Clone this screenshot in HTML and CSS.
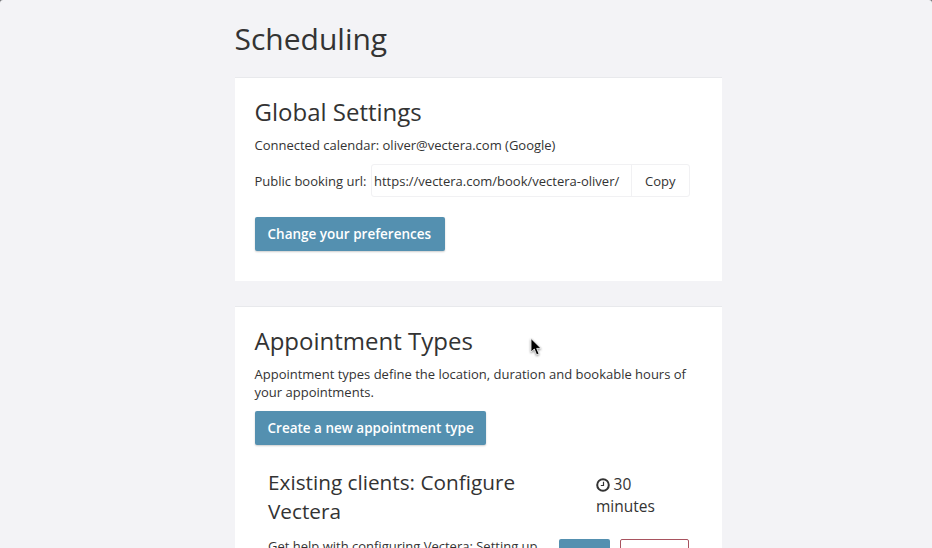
FILE: index.html
```html
<!DOCTYPE html>
<html lang="en">
<head>
<meta charset="utf-8">
<title>Scheduling</title>
<link rel="stylesheet" href="styles.css">
</head>
<body>
<main class="page">
  <h1 class="title">Scheduling</h1>
  <section class="card card-global">
    <h2 class="card-title">Global Settings</h2>
    <p class="line">Connected calendar: oliver@vectera.com (Google)</p>
    <div class="url-row">
      <span class="url-label">Public booking url:</span>
      <div class="url-group">
        <span class="url-value">https://vectera.com/book/vectera-oliver/</span>
        <span class="url-copy">Copy</span>
      </div>
    </div>
    <a class="btn btn-pref">Change your preferences</a>
  </section>
  <section class="card card-types">
    <h2 class="card-title">Appointment Types</h2>
    <p class="line intro">Appointment types define the location, duration and bookable hours of your appointments.</p>
    <a class="btn btn-create">Create a new appointment type</a>
    <article class="appt">
      <div class="appt-head">
        <h3 class="appt-title">Existing clients: Configure Vectera</h3>
        <div class="appt-duration">
          <svg class="clock" viewBox="0 0 14 14" width="14" height="14"><circle cx="7" cy="7" r="5.8" fill="none" stroke="currentColor" stroke-width="2"/><path d="M7.5 3.8V7.5H4.8" fill="none" stroke="currentColor" stroke-width="1.2"/></svg>
          30 minutes
        </div>
      </div>
      <div class="appt-body">
        <p class="appt-desc">Get help with configuring Vectera: Setting up your account and preferences.</p>
        <div class="appt-actions">
          <a class="small-btn edit">Edit</a>
          <a class="small-btn delete">Delete</a>
        </div>
      </div>
    </article>
  </section>
</main>
<svg class="cursor" viewBox="0 0 12 18" width="12" height="18"><path d="M1 .5V14L4.3 11L6.6 16.8L9 15.8L6.7 10.4H11Z" fill="#000" stroke="#fff" stroke-width=".8"/></svg>
</body>
</html>
```
FILE: styles.css
```css
html { margin: 0; height: 100%; overflow: hidden; background: #6f7073; }
body {
  margin: 0;
  height: 100%;
  overflow: hidden;
  background: #f3f3f6;
  border-radius: 3px 3px 0 0;
  font-family: "Open Sans", sans-serif;
  color: #333;
  position: relative;
}
.page { width: 487px; margin-left: 235px; }
.title { margin: 0 0 0 -0.5px; padding-top: 17px; font-size: 30px; line-height: 44px; font-weight: 400; height: 60px; }
.card {
  background: #fff;
  border-top: 1px solid #e8e9ec;
  padding: 0 20px 0 19.5px;
}
.card-global { height: 203px; margin-bottom: 25px; }
.card-title { margin: 0; padding-top: 16px; font-size: 24px; line-height: 36px; font-weight: 400; }
.line { margin: 0; font-size: 13px; line-height: 19px; }
.card-global .line { padding-top: 6px; }
.url-row { display: flex; align-items: center; margin-top: 9px; font-size: 13px; }
.url-label { width: 116px; flex: none; }
.url-group {
  display: flex; height: 31px; width: 317px;
  border: 1px solid #f1f1f3; border-radius: 3px; line-height: 33px;
}
.url-value { width: 257px; padding-left: 2.5px; border-right: 1px solid #f1f1f3; white-space: nowrap; }
.url-copy { flex: 1; text-align: center; }
.btn {
  display: inline-block; background: #5490b0; color: #fff; font-size: 13.5px; font-weight: 600;
  line-height: 34px; height: 34px; padding: 0 13px; border-radius: 2px;
  box-shadow: 0 1px 2px rgba(0,0,0,.2);
}
.btn-pref { margin-top: 20px; padding: 0 13.5px 0 13px; }
.card-types { height: 400px; }
.intro { padding-top: 6px; line-height: 18px; }
.btn-create { margin-top: 10px; padding: 0 12.5px 0 13px; }
.appt { padding: 23px 13px 0 13.5px; }
.appt-head { display: flex; }
.appt-title { margin: 0 28px 0 0; width: 300px; font-size: 20.75px; line-height: 29px; font-weight: 400; }
.appt-duration { width: 90px; font-size: 15.5px; line-height: 22px; padding-top: 5px; }
.clock { vertical-align: -2px; margin-left: -0.5px; }
.appt-body { display: flex; margin-top: 13px; }
.appt-desc { margin: -2px 0 0; width: 291px; font-size: 13px; line-height: 19px; }
.appt-actions { display: flex; gap: 10px; }
.small-btn { display: block; height: 34px; box-sizing: border-box; border-radius: 2px; text-align: center; font-size: 13px; line-height: 34px; }
.edit { width: 51px; background: #5490b0; color: #fff; }
.delete { width: 69px; border: 1px solid #a8535f; color: #a8535f; line-height: 32px; }
.cursor { position: absolute; left: 530px; top: 338px; filter: drop-shadow(0 1px 1px rgba(0,0,0,.45)); }
```
